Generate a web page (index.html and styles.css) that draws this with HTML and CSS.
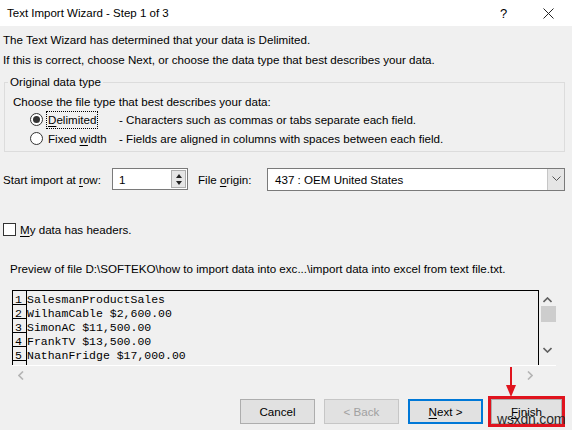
FILE: index.html
```html
<!DOCTYPE html>
<html lang="en">
<head>
    <meta charset="UTF-8">
    <meta name="viewport" content="width=device-width, initial-scale=1.0">
    <title>Text Import Wizard</title>
    <link rel="stylesheet" href="styles.css">
</head>
<body>
    <div class="dialog">
        <div class="titlebar">
            <span class="title">Text Import Wizard - Step 1 of 3</span>
            <span class="tb-btn help">?</span>
            <span class="tb-btn close">
                <svg width="11" height="11" viewBox="0 0 11 11"><path d="M0.5 0.5 L10.5 10.5 M10.5 0.5 L0.5 10.5" stroke="#222" stroke-width="1" fill="none"/></svg>
            </span>
        </div>

        <div class="content">
            <p class="intro">The Text Wizard has determined that your data is Delimited.</p>
            <p class="intro">If this is correct, choose Next, or choose the data type that best describes your data.</p>

            <fieldset class="group">
                <legend>Original data type</legend>
                <p class="group-hint">Choose the file type that best describes your data:</p>
                <div class="choice">
                    <span class="radio checked"></span>
                    <span class="choice-label"><span class="focus"><u>D</u>elimited</span></span>
                    <span class="choice-desc">- Characters such as commas or tabs separate each field.</span>
                </div>
                <div class="choice">
                    <span class="radio"></span>
                    <span class="choice-label"><span class="nofocus">Fixed <u>w</u>idth</span></span>
                    <span class="choice-desc">- Fields are aligned in columns with spaces between each field.</span>
                </div>
            </fieldset>

            <div class="origin-row">
                <span class="field-label">Start import at <u>r</u>ow:</span>
                <div class="spin">
                    <span class="spin-value">1</span>
                    <span class="spin-btns">
                        <span class="spin-up"></span>
                        <span class="spin-down"></span>
                    </span>
                </div>
                <span class="field-label origin-label">File <u>o</u>rigin:</span>
                <div class="combo">
                    <span class="combo-value">437 : OEM United States</span>
                    <span class="combo-btn">
                        <svg width="9" height="6" viewBox="0 0 9 6"><path d="M0.5 0.5 L4.5 4.5 L8.5 0.5" stroke="#555" stroke-width="1" fill="none"/></svg>
                    </span>
                </div>
            </div>

            <div class="check-row">
                <span class="checkbox"></span>
                <span><u>M</u>y data has headers.</span>
            </div>

            <p class="preview-title">Preview of file D:\SOFTEKO\how to import data into exc...\import data into excel from text file.txt.</p>

            <div class="preview">
                <div class="preview-main">
                    <div class="preview-lines">
                        <div class="line"><span class="num">1</span><span class="txt">SalesmanProductSales</span></div>
                        <div class="line"><span class="num">2</span><span class="txt">WilhamCable $2,600.00</span></div>
                        <div class="line"><span class="num">3</span><span class="txt">SimonAC $11,500.00</span></div>
                        <div class="line"><span class="num">4</span><span class="txt">FrankTV $13,500.00</span></div>
                        <div class="line"><span class="num">5</span><span class="txt">NathanFridge $17,000.00</span></div>
                        <div class="line"><span class="num"></span><span class="txt"></span></div>
                    </div>
                    <div class="vscroll">
                        <svg class="arrow-up" width="9" height="6" viewBox="0 0 9 6"><path d="M0.5 5 L4.5 1 L8.5 5" stroke="#606060" stroke-width="1.6" fill="none"/></svg>
                        <span class="thumb"></span>
                        <svg class="arrow-down" width="9" height="6" viewBox="0 0 9 6"><path d="M0.5 1 L4.5 5 L8.5 1" stroke="#606060" stroke-width="1.6" fill="none"/></svg>
                    </div>
                </div>
                <div class="hscroll">
                    <svg width="6" height="9" viewBox="0 0 6 9"><path d="M5 0.5 L1 4.5 L5 8.5" stroke="#b4b4b4" stroke-width="1.6" fill="none"/></svg>
                    <svg width="6" height="9" viewBox="0 0 6 9"><path d="M1 0.5 L5 4.5 L1 8.5" stroke="#b4b4b4" stroke-width="1.6" fill="none"/></svg>
                </div>
            </div>

            <div class="buttons">
                <button class="btn">Cancel</button>
                <button class="btn disabled">&lt; Back</button>
                <button class="btn default"><u>N</u>ext &gt;</button>
                <button class="btn marked"><u>F</u>inish</button>
            </div>
        </div>

        <!-- red pointer over the finish button -->
        <div class="pointer">
            <span class="pointer-shaft"></span>
            <span class="pointer-head"></span>
        </div>
        <div class="stamp">wsxdn.com</div>
    </div>
</body>
</html>
```

FILE: styles.css
```css
*{
    margin: 0px;
    padding: 0px;
    box-sizing: border-box;
}

body{
    font-family: "Liberation Sans", Arial, sans-serif;
    font-size: 11.6px;
    color: #000;
    background-color: #f0f0f0;
}

u{
    text-decoration: underline;
    text-underline-offset: 2px;
}

.dialog{
    width: 572px;
    height: 430px;
    position: relative;
    overflow: hidden;
    background-color: #f0f0f0;
}

/* window title */
.titlebar{
    height: 26px;
    background-color: #fff;
    display: flex;
    align-items: center;
    padding-left: 7px;
}

.title{
    flex: 1;
    font-size: 11.5px;
}

.tb-btn{
    width: 45px;
    height: 26px;
    display: flex;
    align-items: center;
    justify-content: center;
    font-size: 13px;
}

.close{
    margin-right: 1px;
}

.content{
    padding: 4px 0px 0px 3px;
}

.intro{
    line-height: 20px;
    white-space: nowrap;
}

/* group box */
.group{
    margin: 4px 7px 0px 1px;
    border: 1px solid #dcdcdc;
    padding: 0px 8px 3px 8px;
}

.group legend{
    margin-left: -5px;
    padding: 0px 2px;
    line-height: 16px;
}

.group-hint{
    margin-top: 3px;
    line-height: 17px;
}

.choice{
    display: flex;
    align-items: center;
    height: 19px;
}

.radio{
    width: 13px;
    height: 13px;
    margin-left: 17px;
    margin-right: 3px;
    border: 1px solid #333;
    border-radius: 50%;
    background-color: #fff;
    display: flex;
    align-items: center;
    justify-content: center;
}

.radio.checked::after{
    content: "";
    width: 7px;
    height: 7px;
    border-radius: 50%;
    background-color: #333;
}

.choice-label{
    width: 73px;
}

.focus, .nofocus{
    display: inline-block;
    padding: 0px 1px;
    line-height: 16px;
    border: 1px dotted transparent;
}

.focus{
    border-color: #000;
}

/* start row / file origin */
.origin-row{
    display: flex;
    align-items: center;
    height: 22px;
    margin-top: 16px;
}

.field-label{
    width: 109px;
    white-space: nowrap;
}

.origin-label{
    width: 69px;
    margin-left: 10px;
}

.spin{
    width: 76px;
    height: 22px;
    border: 1px solid #7a7a7a;
    background-color: #fff;
    display: flex;
    align-items: center;
    padding-left: 6px;
}

.spin-value{
    flex: 1;
}

.spin-btns{
    width: 15px;
    height: 18px;
    margin-right: 1px;
    border: 1px solid #adadad;
    background-color: #e5e5e5;
    display: flex;
    flex-direction: column;
    align-items: center;
    justify-content: center;
    gap: 3px;
}

.spin-up, .spin-down{
    width: 0px;
    height: 0px;
    border-left: 3.5px solid transparent;
    border-right: 3.5px solid transparent;
}

.spin-up{
    border-bottom: 4px solid #222;
}

.spin-down{
    border-top: 4px solid #222;
}

.combo{
    width: 298px;
    height: 23px;
    border: 1px solid #7a7a7a;
    background-color: #fff;
    display: flex;
    align-items: center;
    padding-left: 7px;
}

.combo-value{
    flex: 1;
}

.combo-btn{
    width: 17px;
    height: 21px;
    border-left: 1px solid #c6c6c6;
    background-color: #e5e5e5;
    display: flex;
    align-items: center;
    justify-content: center;
}

/* headers checkbox */
.check-row{
    display: flex;
    align-items: center;
    height: 16px;
    margin-top: 31px;
    gap: 4px;
}

.checkbox{
    width: 13px;
    height: 13px;
    border: 1px solid #333;
    background-color: #fff;
}

.preview-title{
    margin: 24px 0px 0px 7px;
    line-height: 16px;
    white-space: nowrap;
}

/* preview pane */
.preview{
    margin: 13px 0px 0px 9px;
    width: 544px;
}

.preview-main{
    display: flex;
    height: 76px;
    border-bottom: 1px solid #fff;
}

.preview-lines{
    width: 527px;
    border-top: 1px solid #000;
    border-left: 1px solid #000;
    border-right: 1px solid #000;
    overflow: hidden;
    font-family: "Liberation Mono", "Courier New", monospace;
    font-size: 11.5px;
}

.line{
    display: flex;
    height: 14px;
    line-height: 17px;
}

.num{
    width: 14px;
    border-right: 1px solid #000;
    border-bottom: 1px solid #000;
    padding-left: 2px;
    overflow: hidden;
}

.txt{
    white-space: pre;
}

.vscroll{
    width: 17px;
    display: flex;
    flex-direction: column;
    align-items: center;
    padding-top: 7px;
}

.thumb{
    width: 15px;
    height: 16px;
    margin: 3px 0px 0px 2px;
    background-color: #cdcdcd;
}

.arrow-down{
    margin-top: 25px;
}

.hscroll{
    height: 18px;
    width: 527px;
    display: flex;
    align-items: center;
    justify-content: space-between;
    padding: 0px 6px 0px 6px;
}

/* dialog buttons */
.buttons{
    display: flex;
    justify-content: flex-end;
    gap: 9px;
    margin-top: 15px;
    padding-right: 9px;
}

.btn{
    width: 75px;
    height: 25px;
    font-family: inherit;
    font-size: 11.6px;
    color: #000;
    background-color: #e1e1e1;
    border: 1px solid #adadad;
}

.btn.disabled{
    color: #a0a0a0;
    background-color: #e1e1e1;
    border-color: #c6c6c6;
}

.btn.default{
    border: 2px solid #0078d7;
}

.btn.marked{
    width: 71px;
    outline: 3px solid #e0141e;
    margin-left: -1px;
    margin-right: 1px;
}

.pointer{
    position: absolute;
    left: 506px;
    top: 367px;
    width: 10px;
    display: flex;
    flex-direction: column;
    align-items: center;
}

.pointer-shaft{
    width: 2px;
    height: 18px;
    background-color: #e0141e;
}

.pointer-head{
    width: 0px;
    height: 0px;
    border-left: 5px solid transparent;
    border-right: 5px solid transparent;
    border-top: 12px solid #e0141e;
}

.stamp{
    position: absolute;
    left: 497px;
    top: 411px;
    font-size: 14px;
    color: #2a2a2a;
    letter-spacing: -0.2px;
}
```
